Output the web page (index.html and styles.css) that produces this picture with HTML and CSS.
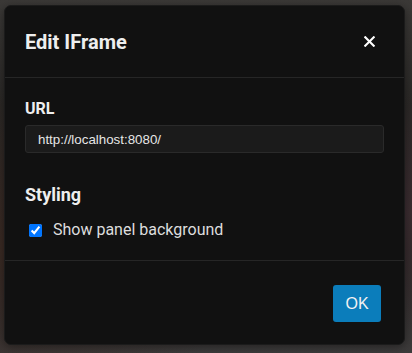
FILE: index.html
```html
<!DOCTYPE html>
<html lang="en">
<head>
  <meta charset="UTF-8">
  <meta name="viewport" content="width=device-width, initial-scale=1.0">
  <title>Edit IFrame</title>
  <link rel="stylesheet" href="styles.css">
</head>
<body>
  <div class="modal">
    <div class="modal-header">
      <h2 class="modal-title">Edit IFrame</h2>
      <button class="btn-close" type="button" aria-label="Close">
        <svg width="11" height="11" viewBox="0 0 11 11">
          <path d="M1.3 1.3 L9.7 9.7 M9.7 1.3 L1.3 9.7" stroke="#fff" stroke-width="2.1" stroke-linecap="square"/>
        </svg>
      </button>
    </div>

    <div class="modal-body">
      <label class="field-label" for="url">URL</label>
      <input id="url" class="text-input" value="http://localhost:8080/">

      <h3 class="section-title">Styling</h3>
      <label class="check-row">
        <input type="checkbox" checked>
        <span>Show panel background</span>
      </label>
    </div>

    <div class="modal-footer">
      <button class="btn-primary" type="button">OK</button>
    </div>
  </div>
</body>
</html>
```

FILE: styles.css
```css
:root {
  --modal-bg: #111111;
  --line: #262626;
  --text: #eeeeee;
  --muted: #dddddd;
  --primary: #0b7dbb;
}

html, body {
  height: 100%;
}

body {
  margin: 0;
  font-family: Roboto, "Liberation Sans", sans-serif;
  color: var(--text);
  background:
    radial-gradient(ellipse at 0% 70%, #3a2a24 0%, rgba(58, 42, 36, 0) 45%),
    radial-gradient(ellipse at 100% 60%, #3a2c30 0%, rgba(58, 44, 48, 0) 40%),
    linear-gradient(180deg, #3b3937 0%, #2a2826 30%, #2b2726 70%, #3d3b3b 100%);
  overflow: hidden;
}

.modal {
  width: 401px;
  height: 340px;
  margin: 5px 0 0 4px;
  box-sizing: border-box;
  background: var(--modal-bg);
  border: 1px solid #1b1b1b;
  border-radius: 7px;
  display: flex;
  flex-direction: column;
  box-shadow: 0 2px 10px rgba(0, 0, 0, 0.4);
}

.modal-header {
  height: 71px;
  padding: 0 29px 0 20px;
  display: flex;
  align-items: center;
  justify-content: space-between;
  border-bottom: 1px solid var(--line);
}

.modal-title {
  margin: 0;
  font-size: 20px;
  font-weight: 700;
  color: var(--text);
}

.btn-close {
  background: none;
  border: none;
  padding: 0;
  width: 11px;
  height: 11px;
  display: flex;
  cursor: pointer;
}

.modal-body {
  padding: 19px 20px 18px;
  display: flex;
  flex-direction: column;
  border-bottom: 1px solid var(--line);
}

.field-label {
  font-size: 16px;
  font-weight: 700;
  line-height: 24px;
  margin-bottom: 4px;
}

.text-input {
  height: 28px;
  box-sizing: border-box;
  padding: 0 12px;
  background: #1b1b1b;
  border: 1px solid #2a2a2a;
  border-radius: 3px;
  color: #e6e6e6;
  font-family: "Liberation Sans", Arial, sans-serif;
  font-size: 13.333px;
  outline: none;
}

.section-title {
  margin: 28px 0 10px;
  font-size: 18px;
  font-weight: 700;
  line-height: 27px;
}

.check-row {
  display: flex;
  align-items: center;
  gap: 11px;
  padding-left: 4px;
  font-size: 16px;
  line-height: 24px;
  color: var(--muted);
}

.check-row input {
  margin: 0;
  width: 13px;
  height: 13px;
}

.modal-footer {
  flex: 1;
  display: flex;
  justify-content: flex-end;
  align-items: flex-start;
  padding: 24px 23px 0;
}

.btn-primary {
  width: 48px;
  height: 37px;
  padding: 0;
  background: var(--primary);
  color: #f2f2f2;
  border: none;
  border-radius: 3px;
  font-family: "Liberation Sans", Arial, sans-serif;
  font-size: 16px;
  cursor: pointer;
}
```
